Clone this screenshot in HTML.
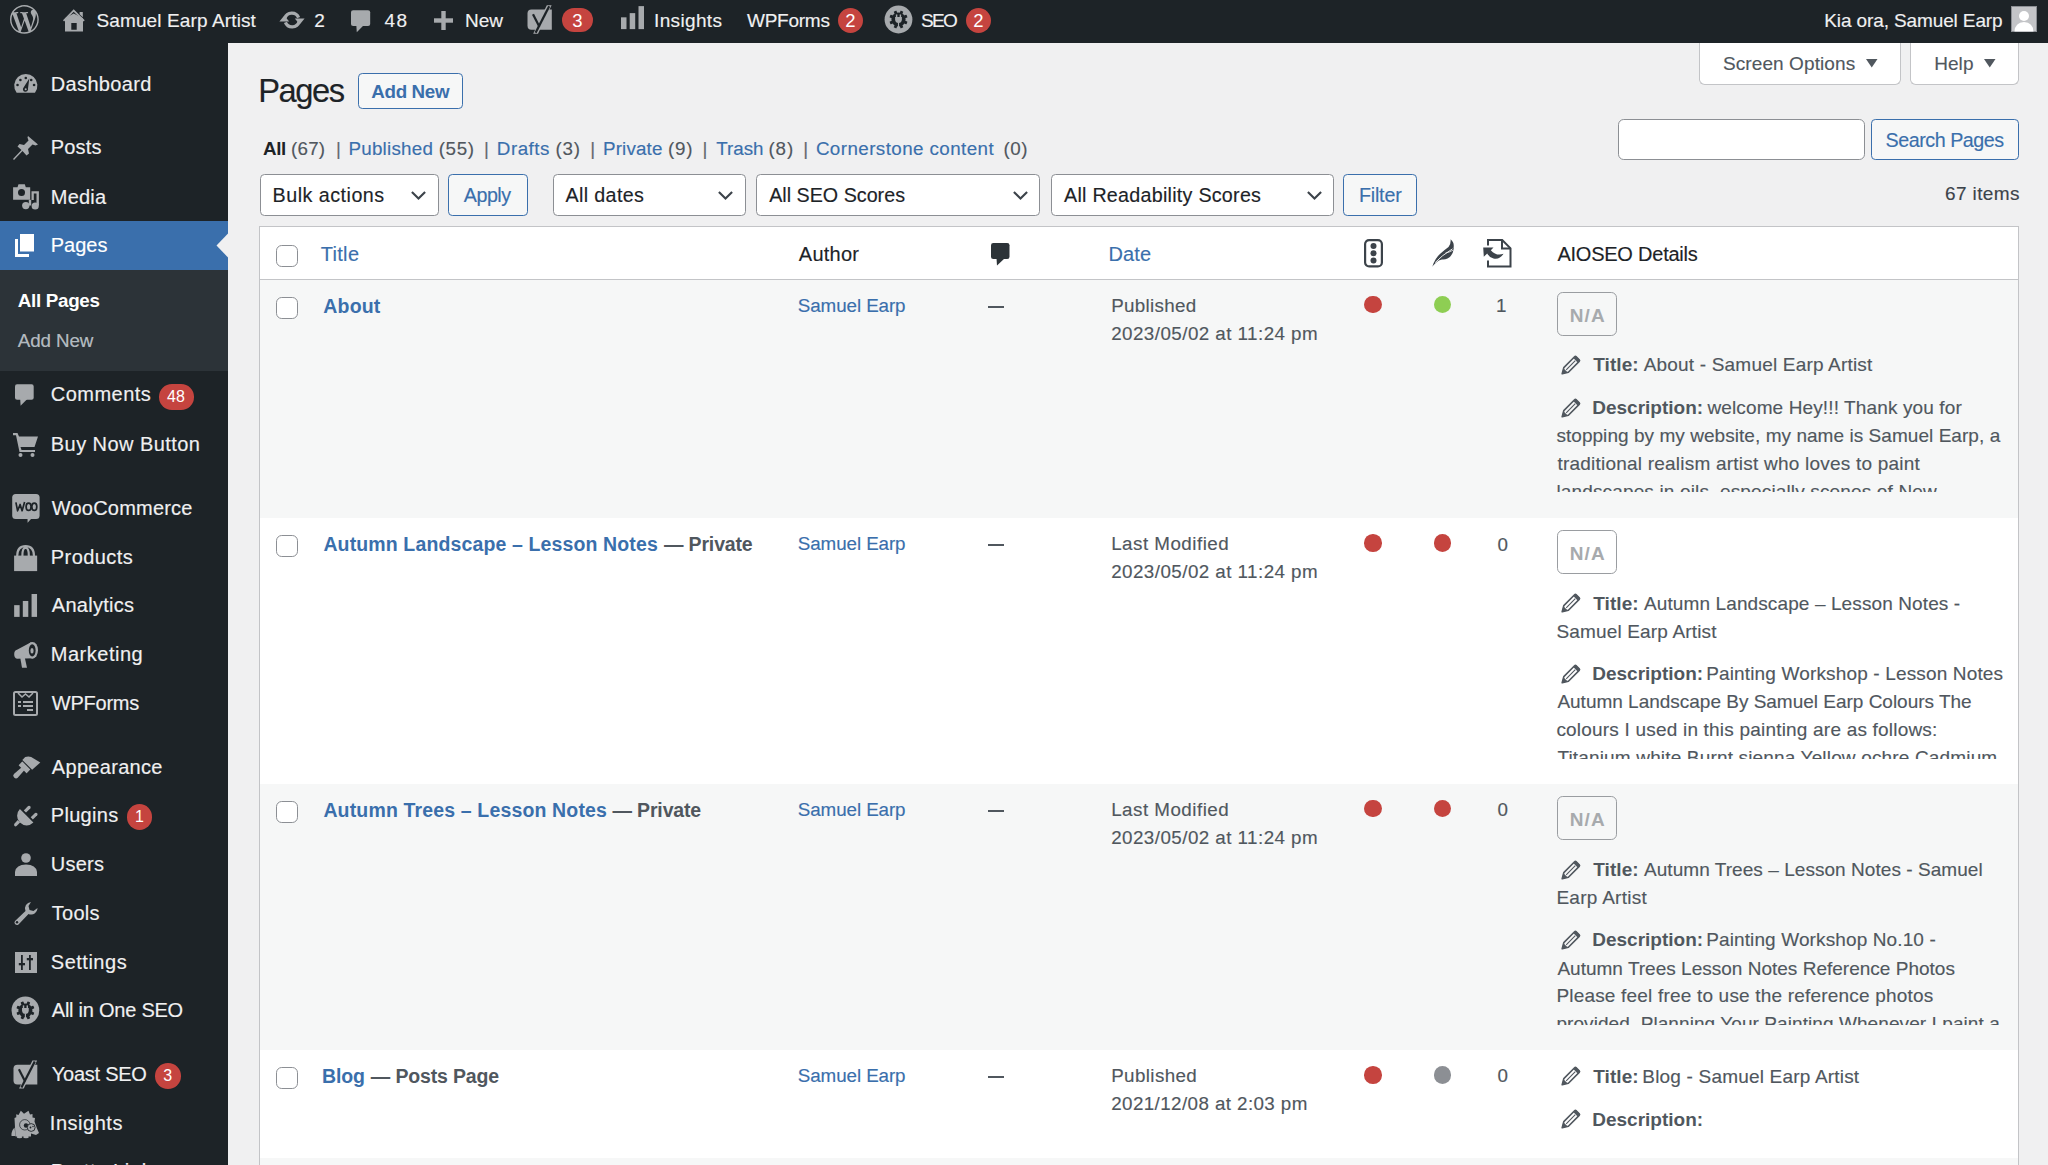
<!DOCTYPE html>
<html><head><meta charset="utf-8"><title>Pages ‹ Samuel Earp Artist — WordPress</title>
<style>
html,body{margin:0;padding:0}
body{width:2048px;height:1165px;overflow:hidden;position:relative;background:#f0f0f1;font-family:"Liberation Sans",sans-serif}
.t{position:absolute;white-space:nowrap;line-height:1}
svg{overflow:visible}
</style></head><body>
<div style='position:absolute;left:0px;top:0px;width:2048px;height:42.5px;background:#1d2327'></div>
<div style='position:absolute;left:0px;top:42.5px;width:227.5px;height:1122.5px;background:#1d2327'></div>
<div style='position:absolute;left:0px;top:220.7px;width:227.5px;height:49.1px;background:#3a6fac'></div>
<div style='position:absolute;left:0px;top:269.8px;width:227.5px;height:101.0px;background:#2c3338'></div>
<svg style='position:absolute;left:215.5px;top:232.5px;width:12.5px;height:25px' viewBox='0 0 12.5 25'><path d='M12.5 0 L0.5 12.5 L12.5 25 Z' fill='#f0f0f1'/></svg>
<div style='position:absolute;left:1699.4px;top:42.5px;width:201.6px;height:42.1px;background:#fff;border:1.4px solid #c3c4c7;border-top:none;border-radius:0 0 5.7px 5.7px;box-sizing:border-box'></div>
<div style='position:absolute;left:1910.4px;top:42.5px;width:108.9px;height:42.1px;background:#fff;border:1.4px solid #c3c4c7;border-top:none;border-radius:0 0 5.7px 5.7px;box-sizing:border-box'></div>
<svg style='position:absolute;left:1866px;top:58.9px;width:11.5px;height:8.5px;' viewBox='0 0 11.5 8.5'><path d='M0 0 L11.5 0 L5.75 8.5 Z' fill='#50575e'/></svg>
<svg style='position:absolute;left:1983.7px;top:58.9px;width:11.5px;height:8.5px;' viewBox='0 0 11.5 8.5'><path d='M0 0 L11.5 0 L5.75 8.5 Z' fill='#50575e'/></svg>
<div style='position:absolute;left:1618.1px;top:118.5px;width:246.6px;height:41.9px;background:#fff;border:1.4px solid #8c8f94;border-radius:5.7px;box-sizing:border-box'></div>
<div style='position:absolute;left:1871px;top:118.5px;width:148.3px;height:41.9px;background:#f6f7f7;border:1.4px solid #3a6fac;border-radius:4.3px;box-sizing:border-box'></div>
<div style='position:absolute;left:358px;top:73.4px;width:105.4px;height:35.2px;background:#f6f7f7;border:1.4px solid #3a6fac;border-radius:4.3px;box-sizing:border-box'></div>
<div style='position:absolute;left:260.3px;top:174px;width:178.45px;height:41.6px;background:#fff;border:1.5px solid #8c8f94;border-radius:4.5px;box-sizing:border-box'></div>
<svg style='position:absolute;left:411.4px;top:191.4px;width:15px;height:9px;' viewBox='0 0 15 9'><path d='M0.9 0.9 L7.5 7.6 L14.1 0.9' fill='none' stroke='#3c434a' stroke-width='2.1'/></svg>
<div style='position:absolute;left:552.5px;top:174px;width:193.0px;height:41.6px;background:#fff;border:1.5px solid #8c8f94;border-radius:4.5px;box-sizing:border-box'></div>
<svg style='position:absolute;left:718.2px;top:191.4px;width:15px;height:9px;' viewBox='0 0 15 9'><path d='M0.9 0.9 L7.5 7.6 L14.1 0.9' fill='none' stroke='#3c434a' stroke-width='2.1'/></svg>
<div style='position:absolute;left:756.4px;top:174px;width:283.4px;height:41.6px;background:#fff;border:1.5px solid #8c8f94;border-radius:4.5px;box-sizing:border-box'></div>
<svg style='position:absolute;left:1013.3px;top:191.4px;width:15px;height:9px;' viewBox='0 0 15 9'><path d='M0.9 0.9 L7.5 7.6 L14.1 0.9' fill='none' stroke='#3c434a' stroke-width='2.1'/></svg>
<div style='position:absolute;left:1050.9px;top:174px;width:283.4px;height:41.6px;background:#fff;border:1.5px solid #8c8f94;border-radius:4.5px;box-sizing:border-box'></div>
<svg style='position:absolute;left:1307px;top:191.4px;width:15px;height:9px;' viewBox='0 0 15 9'><path d='M0.9 0.9 L7.5 7.6 L14.1 0.9' fill='none' stroke='#3c434a' stroke-width='2.1'/></svg>
<div style='position:absolute;left:447.5px;top:174px;width:80.0px;height:41.6px;background:#f6f7f7;border:1.5px solid #3a6fac;border-radius:4.3px;box-sizing:border-box'></div>
<div style='position:absolute;left:1343.3px;top:174px;width:74.1px;height:41.6px;background:#f6f7f7;border:1.5px solid #3a6fac;border-radius:4.3px;box-sizing:border-box'></div>
<div style='position:absolute;left:259.0px;top:226.3px;width:1760.3px;height:943.7px;background:#fff;border:1.3px solid #c3c4c7;box-sizing:border-box'></div>
<div style='position:absolute;left:260.3px;top:278.7px;width:1757.7px;height:1.4px;background:#c3c4c7'></div>
<div style='position:absolute;left:260.3px;top:280.1px;width:1757.7px;height:237.8px;background:#f6f7f7'></div>
<div style='position:absolute;left:260.3px;top:783.7px;width:1757.7px;height:266.3px;background:#f6f7f7'></div>
<div style='position:absolute;left:260.3px;top:1158.1px;width:1757.7px;height:11.9px;background:#f6f7f7'></div>
<div style='position:absolute;left:276.1px;top:244.8px;width:22.4px;height:22.4px;background:#fff;border:1.6px solid #8c8f94;border-radius:5.7px;box-sizing:border-box'></div>
<div style='position:absolute;left:276.1px;top:296.5px;width:22.4px;height:22.4px;background:#fff;border:1.6px solid #8c8f94;border-radius:5.7px;box-sizing:border-box'></div>
<div style='position:absolute;left:988px;top:306px;width:15.5px;height:2px;background:#50575e'></div>
<div style='position:absolute;left:1364.3px;top:295.7px;width:17.5px;height:17.5px;background:#c5443f;border-radius:50%'></div>
<div style='position:absolute;left:1433.7px;top:295.7px;width:17.5px;height:17.5px;background:#8ece53;border-radius:50%'></div>
<div style='position:absolute;left:1557px;top:291.8px;width:60.4px;height:43.9px;border:1.5px solid #9a9da1;border-radius:5.7px;box-sizing:border-box'></div>
<svg style='position:absolute;left:1561.2px;top:355.0px;width:20px;height:20px;' viewBox='0 0 20 20'><path d='M1.2 18.8 L2.8 12.6 L13.6 1.8 Q14.4 1 15.2 1.8 L18.2 4.8 Q19 5.6 18.2 6.4 L7.4 17.2 Z' fill='none' stroke='#50575e' stroke-width='1.6' stroke-linejoin='round'/><path d='M1 19 L2.4 13.2 L6.8 17.6 Z' fill='#50575e'/><path d='M12.3 3.1 L14.4 1.4 Q14.8 1.1 15.2 1.4 L18.6 4.8 Q18.9 5.2 18.6 5.6 L16.9 7.7 Z' fill='#50575e'/><path d='M5.2 14.8 L14.3 5.7' stroke='#50575e' stroke-width='1.1'/></svg>
<svg style='position:absolute;left:1561.2px;top:397.7px;width:20px;height:20px;' viewBox='0 0 20 20'><path d='M1.2 18.8 L2.8 12.6 L13.6 1.8 Q14.4 1 15.2 1.8 L18.2 4.8 Q19 5.6 18.2 6.4 L7.4 17.2 Z' fill='none' stroke='#50575e' stroke-width='1.6' stroke-linejoin='round'/><path d='M1 19 L2.4 13.2 L6.8 17.6 Z' fill='#50575e'/><path d='M12.3 3.1 L14.4 1.4 Q14.8 1.1 15.2 1.4 L18.6 4.8 Q18.9 5.2 18.6 5.6 L16.9 7.7 Z' fill='#50575e'/><path d='M5.2 14.8 L14.3 5.7' stroke='#50575e' stroke-width='1.1'/></svg>
<div style='position:absolute;left:276.1px;top:534.9px;width:22.4px;height:22.4px;background:#fff;border:1.6px solid #8c8f94;border-radius:5.7px;box-sizing:border-box'></div>
<div style='position:absolute;left:988px;top:544px;width:15.5px;height:2px;background:#50575e'></div>
<div style='position:absolute;left:1364.3px;top:534.1px;width:17.5px;height:17.5px;background:#c5443f;border-radius:50%'></div>
<div style='position:absolute;left:1433.7px;top:534.1px;width:17.5px;height:17.5px;background:#c5443f;border-radius:50%'></div>
<div style='position:absolute;left:1557px;top:530.4px;width:60.4px;height:43.8px;border:1.5px solid #9a9da1;border-radius:5.7px;box-sizing:border-box'></div>
<svg style='position:absolute;left:1561.2px;top:593.3px;width:20px;height:20px;' viewBox='0 0 20 20'><path d='M1.2 18.8 L2.8 12.6 L13.6 1.8 Q14.4 1 15.2 1.8 L18.2 4.8 Q19 5.6 18.2 6.4 L7.4 17.2 Z' fill='none' stroke='#50575e' stroke-width='1.6' stroke-linejoin='round'/><path d='M1 19 L2.4 13.2 L6.8 17.6 Z' fill='#50575e'/><path d='M12.3 3.1 L14.4 1.4 Q14.8 1.1 15.2 1.4 L18.6 4.8 Q18.9 5.2 18.6 5.6 L16.9 7.7 Z' fill='#50575e'/><path d='M5.2 14.8 L14.3 5.7' stroke='#50575e' stroke-width='1.1'/></svg>
<svg style='position:absolute;left:1561.2px;top:663.8px;width:20px;height:20px;' viewBox='0 0 20 20'><path d='M1.2 18.8 L2.8 12.6 L13.6 1.8 Q14.4 1 15.2 1.8 L18.2 4.8 Q19 5.6 18.2 6.4 L7.4 17.2 Z' fill='none' stroke='#50575e' stroke-width='1.6' stroke-linejoin='round'/><path d='M1 19 L2.4 13.2 L6.8 17.6 Z' fill='#50575e'/><path d='M12.3 3.1 L14.4 1.4 Q14.8 1.1 15.2 1.4 L18.6 4.8 Q18.9 5.2 18.6 5.6 L16.9 7.7 Z' fill='#50575e'/><path d='M5.2 14.8 L14.3 5.7' stroke='#50575e' stroke-width='1.1'/></svg>
<div style='position:absolute;left:276.1px;top:800.7px;width:22.4px;height:22.4px;background:#fff;border:1.6px solid #8c8f94;border-radius:5.7px;box-sizing:border-box'></div>
<div style='position:absolute;left:988px;top:810px;width:15.5px;height:2px;background:#50575e'></div>
<div style='position:absolute;left:1364.3px;top:799.9px;width:17.5px;height:17.5px;background:#c5443f;border-radius:50%'></div>
<div style='position:absolute;left:1433.7px;top:799.9px;width:17.5px;height:17.5px;background:#c5443f;border-radius:50%'></div>
<div style='position:absolute;left:1557px;top:796.1px;width:60.4px;height:44.2px;border:1.5px solid #9a9da1;border-radius:5.7px;box-sizing:border-box'></div>
<svg style='position:absolute;left:1561.2px;top:859.5px;width:20px;height:20px;' viewBox='0 0 20 20'><path d='M1.2 18.8 L2.8 12.6 L13.6 1.8 Q14.4 1 15.2 1.8 L18.2 4.8 Q19 5.6 18.2 6.4 L7.4 17.2 Z' fill='none' stroke='#50575e' stroke-width='1.6' stroke-linejoin='round'/><path d='M1 19 L2.4 13.2 L6.8 17.6 Z' fill='#50575e'/><path d='M12.3 3.1 L14.4 1.4 Q14.8 1.1 15.2 1.4 L18.6 4.8 Q18.9 5.2 18.6 5.6 L16.9 7.7 Z' fill='#50575e'/><path d='M5.2 14.8 L14.3 5.7' stroke='#50575e' stroke-width='1.1'/></svg>
<svg style='position:absolute;left:1561.2px;top:929.7px;width:20px;height:20px;' viewBox='0 0 20 20'><path d='M1.2 18.8 L2.8 12.6 L13.6 1.8 Q14.4 1 15.2 1.8 L18.2 4.8 Q19 5.6 18.2 6.4 L7.4 17.2 Z' fill='none' stroke='#50575e' stroke-width='1.6' stroke-linejoin='round'/><path d='M1 19 L2.4 13.2 L6.8 17.6 Z' fill='#50575e'/><path d='M12.3 3.1 L14.4 1.4 Q14.8 1.1 15.2 1.4 L18.6 4.8 Q18.9 5.2 18.6 5.6 L16.9 7.7 Z' fill='#50575e'/><path d='M5.2 14.8 L14.3 5.7' stroke='#50575e' stroke-width='1.1'/></svg>
<div style='position:absolute;left:276.1px;top:1067px;width:22.4px;height:22.4px;background:#fff;border:1.6px solid #8c8f94;border-radius:5.7px;box-sizing:border-box'></div>
<div style='position:absolute;left:988px;top:1076px;width:15.5px;height:2px;background:#50575e'></div>
<div style='position:absolute;left:1364.3px;top:1066.2px;width:17.5px;height:17.5px;background:#c5443f;border-radius:50%'></div>
<div style='position:absolute;left:1433.7px;top:1066.2px;width:17.5px;height:17.5px;background:#8c8f94;border-radius:50%'></div>
<svg style='position:absolute;left:1561.2px;top:1066px;width:20px;height:20px;' viewBox='0 0 20 20'><path d='M1.2 18.8 L2.8 12.6 L13.6 1.8 Q14.4 1 15.2 1.8 L18.2 4.8 Q19 5.6 18.2 6.4 L7.4 17.2 Z' fill='none' stroke='#50575e' stroke-width='1.6' stroke-linejoin='round'/><path d='M1 19 L2.4 13.2 L6.8 17.6 Z' fill='#50575e'/><path d='M12.3 3.1 L14.4 1.4 Q14.8 1.1 15.2 1.4 L18.6 4.8 Q18.9 5.2 18.6 5.6 L16.9 7.7 Z' fill='#50575e'/><path d='M5.2 14.8 L14.3 5.7' stroke='#50575e' stroke-width='1.1'/></svg>
<svg style='position:absolute;left:1561.2px;top:1108.9px;width:20px;height:20px;' viewBox='0 0 20 20'><path d='M1.2 18.8 L2.8 12.6 L13.6 1.8 Q14.4 1 15.2 1.8 L18.2 4.8 Q19 5.6 18.2 6.4 L7.4 17.2 Z' fill='none' stroke='#50575e' stroke-width='1.6' stroke-linejoin='round'/><path d='M1 19 L2.4 13.2 L6.8 17.6 Z' fill='#50575e'/><path d='M12.3 3.1 L14.4 1.4 Q14.8 1.1 15.2 1.4 L18.6 4.8 Q18.9 5.2 18.6 5.6 L16.9 7.7 Z' fill='#50575e'/><path d='M5.2 14.8 L14.3 5.7' stroke='#50575e' stroke-width='1.1'/></svg>
<svg style='position:absolute;left:990.7px;top:243.2px;width:18.5px;height:22.5px;' viewBox='0 0 18.5 22.5'><rect x='0' y='0' width='18.5' height='16' rx='2.3' fill='#2c3338'/><path d='M5.5 15 L14 15 L6 22.5 Z' fill='#2c3338'/></svg>
<svg style='position:absolute;left:1364.3px;top:239px;width:19px;height:28.5px;' viewBox='0 0 19 28.5'><rect x='1.1' y='1.1' width='16.8' height='26.3' rx='4' fill='none' stroke='#3c434a' stroke-width='2.2'/><circle cx='9.5' cy='7' r='3' fill='#3c434a'/><circle cx='9.5' cy='14.2' r='3' fill='#3c434a'/><circle cx='9.5' cy='21.5' r='3' fill='#3c434a'/></svg>
<svg style='position:absolute;left:1432px;top:239.2px;width:22px;height:28px;' viewBox='0 0 22 28'><path d='M0.3 27.8 Q3 19 8.5 14.5 Q13 10.5 16.5 8 Q19 5.5 18.6 0.3 Q22.5 3.5 21.6 8.5 Q21.8 9.5 21.5 11 Q20.5 17 15.5 19.5 Q13 20.8 10 20.5 Q6.5 21 4.2 23.5 Q2 25.5 0.3 27.8 Z' fill='#3c434a'/><path d='M3.2 23.6 Q9 17 20.5 9.8' fill='none' stroke='#fff' stroke-width='0.9'/><path d='M13.5 14 Q17 13.5 21.5 11' fill='none' stroke='#fff' stroke-width='0.7'/></svg>
<svg style='position:absolute;left:1482.7px;top:239px;width:29px;height:28.5px;' viewBox='0 0 29 28.5'><path d='M5 6.5 L5 1 L19.2 1 L27.5 9.3 L27.5 27.5 L5 27.5 L5 21.5' fill='none' stroke='#3c434a' stroke-width='2'/><path d='M19 1 L19 9.5 L27.5 9.5' fill='none' stroke='#3c434a' stroke-width='2'/><path d='M0.2 8.5 L10.5 8.6 L7.8 11.2 Q13.5 17.5 20.5 14.8 Q16.5 21 10.5 19.5 Q6 18.2 4.2 14.5 L0.8 17.8 Z' fill='#3c434a'/></svg>
<svg style='position:absolute;left:9.8px;top:5.4px;width:28.8px;height:28.8px;' viewBox='0 0 24 24'><path fill='#a7aaad' d='M21.469 6.825c.84 1.537 1.318 3.3 1.318 5.175 0 3.979-2.156 7.456-5.363 9.325l3.295-9.527c.615-1.54.82-2.771.82-3.864 0-.405-.026-.78-.07-1.11m-7.981.105c.647-.03 1.232-.105 1.232-.105.582-.075.514-.93-.067-.899 0 0-1.755.135-2.88.135-1.064 0-2.85-.15-2.85-.15-.585-.03-.661.855-.075.885 0 0 .54.061 1.125.09l1.68 4.605-2.37 7.08L5.354 6.9c.649-.03 1.234-.1 1.234-.1.585-.075.516-.93-.065-.896 0 0-1.746.138-2.874.138-.2 0-.438-.008-.69-.015C4.911 3.15 8.235 1.215 12 1.215c2.809 0 5.365 1.072 7.286 2.833-.046-.003-.091-.009-.141-.009-1.06 0-1.812.923-1.812 1.914 0 .89.513 1.643 1.06 2.531.411.72.89 1.643.89 2.977 0 .915-.354 1.994-.821 3.479l-1.075 3.585-3.9-11.61.001.014zM12 22.784c-1.059 0-2.081-.153-3.048-.437l3.237-9.406 3.315 9.087c.024.053.05.101.078.149-1.12.393-2.325.609-3.582.609M1.211 12c0-1.564.336-3.05.935-4.39L7.29 21.709C3.694 19.96 1.212 16.271 1.211 12M12 0C5.385 0 0 5.385 0 12s5.385 12 12 12 12-5.385 12-12S18.615 0 12 0'/></svg>
<svg style='position:absolute;left:63px;top:9px;width:22px;height:23px;' viewBox='0 0 22 23'><path d='M0.00 11.30 L10.70 0.30 L21.70 11.30 L20.60 12.50 L10.70 2.80 L1.10 12.50 Z' fill='#a7aaad'/><path d='M16.60 3.00 L19.80 3.00 L19.80 8.20 L16.60 5.20 Z' fill='#a7aaad'/><path d='M2.00 9.30 L10.70 4.50 L20.00 9.30 L20.00 22.50 L2.00 22.50 Z M8.30 14.00 L8.30 20.80 L13.70 20.80 L13.70 14.00 Z' fill='#a7aaad' fill-rule='evenodd'/></svg>
<svg style='position:absolute;left:279px;top:10px;width:26px;height:20px;' viewBox='0 0 26 20'><path d='M5.9 8.2 A7.3 7.3 0 0 1 19.6 7.6' fill='none' stroke='#a7aaad' stroke-width='3.3'/><path d='M15.8 8.6 L25.6 8.6 L20.7 14.6 Z' fill='#a7aaad'/><path d='M20.1 11.8 A7.3 7.3 0 0 1 6.4 12.4' fill='none' stroke='#a7aaad' stroke-width='3.3'/><path d='M0.4 11.4 L10.2 11.4 L5.3 5.4 Z' fill='#a7aaad'/></svg>
<svg style='position:absolute;left:351px;top:9.8px;width:19.2px;height:22.4px;' viewBox='0 0 20 23'><rect x='0' y='0' width='20' height='16.5' rx='2.2' fill='#a7aaad'/><path d='M5.5 15 L14 15 L6 23 Z' fill='#a7aaad'/></svg>
<svg style='position:absolute;left:434px;top:11.2px;width:19px;height:19px;' viewBox='0 0 19 19'><rect x='7.3' y='0' width='4.4' height='19' fill='#a7aaad'/><rect x='0' y='7.3' width='19' height='4.4' fill='#a7aaad'/></svg>
<svg style='position:absolute;left:527px;top:5px;width:25px;height:29px;' viewBox='0 0 25 29'><path d='M4.5 4.6 L24.8 4.6 L24.8 24.7 L4.5 24.7 Q0.5 24.7 0.5 20.7 L0.5 8.6 Q0.5 4.6 4.5 4.6 Z' fill='#a7aaad'/><path d='M19.8 0.3 L24.6 0.3 L11 28.8 L6.2 28.8 Z' fill='#a7aaad'/><path d='M22.2 1.3 L8.6 27.8' stroke='#1d2327' stroke-width='2.3' fill='none'/><path d='M6 9.2 L12.4 21.8' stroke='#1d2327' stroke-width='2.2' fill='none'/></svg>
<div style='position:absolute;left:562.2px;top:7.9px;width:30.5px;height:24px;border-radius:12.0px;background:#c5443f;color:#fff;font-size:18.5px;line-height:25.5px;text-align:center;font-family:"Liberation Sans",sans-serif'>3</div>
<svg style='position:absolute;left:620.75px;top:5.5px;width:23px;height:23.25px;' viewBox='0 0 23 23'><rect x='0' y='11.2' width='5.5' height='11.8' fill='#a7aaad'/><rect x='8.7' y='7' width='5.5' height='16' fill='#a7aaad'/><rect x='17.5' y='0' width='5.5' height='23' fill='#a7aaad'/></svg>
<div style='position:absolute;left:837.75px;top:7.5px;width:25.5px;height:25px;border-radius:12.5px;background:#c5443f;color:#fff;font-size:18.5px;line-height:26.5px;text-align:center;font-family:"Liberation Sans",sans-serif'>2</div>
<svg style='position:absolute;left:883.9px;top:5.0px;width:29px;height:29px;' viewBox='0 0 30 30'><circle cx='15' cy='15' r='14.4' fill='#a7aaad'/><circle cx='15' cy='15' r='7.3' fill='#1d2327'/><rect x='20.52' y='10.19' width='3' height='3.8' rx='0.5' transform='rotate(67.5 22.02 12.09)' fill='#1d2327'/><rect x='16.41' y='6.08' width='3' height='3.8' rx='0.5' transform='rotate(22.5 17.91 7.98)' fill='#1d2327'/><rect x='10.59' y='6.08' width='3' height='3.8' rx='0.5' transform='rotate(-22.5 12.09 7.98)' fill='#1d2327'/><rect x='6.48' y='10.19' width='3' height='3.8' rx='0.5' transform='rotate(-67.5 7.98 12.09)' fill='#1d2327'/><rect x='6.48' y='16.01' width='3' height='3.8' rx='0.5' transform='rotate(-112.5 7.98 17.91)' fill='#1d2327'/><rect x='10.59' y='20.12' width='3' height='3.8' rx='0.5' transform='rotate(-157.5 12.09 22.02)' fill='#1d2327'/><rect x='16.41' y='20.12' width='3' height='3.8' rx='0.5' transform='rotate(-202.5 17.91 22.02)' fill='#1d2327'/><rect x='20.52' y='16.01' width='3' height='3.8' rx='0.5' transform='rotate(-247.5 22.02 17.91)' fill='#1d2327'/><rect x='12.3' y='9.8' width='1.5' height='3' fill='#a7aaad'/><rect x='16.2' y='9.8' width='1.5' height='3' fill='#a7aaad'/><path d='M11.5 12.4 L18.5 12.4 L18.5 14.8 Q18.5 18.6 15 18.6 Q11.5 18.6 11.5 14.8 Z' fill='#a7aaad'/><rect x='14.4' y='18' width='1.2' height='7' fill='#a7aaad'/></svg>
<div style='position:absolute;left:965.75px;top:7.5px;width:25.5px;height:25px;border-radius:12.5px;background:#c5443f;color:#fff;font-size:18.5px;line-height:26.5px;text-align:center;font-family:"Liberation Sans",sans-serif'>2</div>
<svg style='position:absolute;left:2011px;top:5.8px;width:26px;height:26px;' viewBox='0 0 26 26'><rect x='0.5' y='0.5' width='25' height='25' fill='#c3c4c7' stroke='#8c8f94' stroke-width='1'/><circle cx='13' cy='10' r='5' fill='#fff'/><path d='M3.5 25.5 Q4 16.5 13 16 Q22 16.5 22.5 25.5 Z' fill='#fff'/></svg>
<svg style='position:absolute;left:13.8px;top:73.7px;width:24px;height:20px;' viewBox='0 0 24 20'><path d='M2.63 18.7 A11.6 11.6 0 1 1 20.97 18.7 Z' fill='#a7aaad'/><circle cx='3.53' cy='10.94' r='1.3' fill='#1d2327'/><circle cx='6.40' cy='5.97' r='1.3' fill='#1d2327'/><circle cx='11.80' cy='4.00' r='1.3' fill='#1d2327'/><circle cx='17.20' cy='5.97' r='1.3' fill='#1d2327'/><circle cx='20.07' cy='10.94' r='1.3' fill='#1d2327'/><path d='M15.3 4.6 L14 14.5 A2.6 2.6 0 1 1 9.6 13.4 Z' fill='#1d2327'/><circle cx='11.7' cy='15.2' r='1.0' fill='#a7aaad'/></svg>
<svg style='position:absolute;left:12.8px;top:135.9px;width:25px;height:24px;' viewBox='0 0 25 24'><path d='M15 0 L25 8.5 L22.5 9.5 L19.5 8.5 L15 13 L16 17.5 L13.5 19.5 L9.5 15 L1 24 L0 23 L8.5 14 L4.5 10.5 L6.5 8 L11 9 L15.5 4.5 L14.5 1.5 Z' fill='#a7aaad'/></svg>
<svg style='position:absolute;left:12.8px;top:184.2px;width:27px;height:27px;' viewBox='0 0 27 27'><path d='M0.10 3.20 L4.50 3.20 L5.50 0.20 L11.80 0.20 L12.80 3.20 L17.20 3.20 L17.20 15.80 L0.10 15.80 Z' fill='#a7aaad'/><circle cx='8.50' cy='8.60' r='3.5' fill='#1d2327'/><path d='M18.50 7.30 L25.90 7.30 L25.90 21.50 L23.50 21.50 L23.50 9.60 L20.80 9.60 L20.80 16.00 L18.50 16.00 Z' fill='#a7aaad'/><circle cx='22.20' cy='22.00' r='3.6' fill='#a7aaad'/><path d='M15.80 15.80 L18.20 15.80 L18.20 21.50 L15.80 21.50 Z' fill='#a7aaad'/><circle cx='12.80' cy='21.60' r='3.7' fill='#a7aaad'/></svg>
<svg style='position:absolute;left:15.2px;top:234px;width:19px;height:23px;' viewBox='0 0 19 23'><rect x='5' y='0' width='14' height='17.5' fill='#fff'/><path d='M0 5 L3 5 L3 20 L14 20 L14 23 L0 23 Z' fill='#fff'/></svg>
<svg style='position:absolute;left:15.4px;top:384px;width:18.7px;height:22.2px;' viewBox='0 0 20 23'><rect x='0' y='0' width='20' height='16.5' rx='2.2' fill='#a7aaad'/><path d='M5.5 15 L14 15 L6 23 Z' fill='#a7aaad'/></svg>
<div style='position:absolute;left:158.5px;top:384.1px;width:35px;height:25.7px;border-radius:12.85px;background:#c5443f;color:#fff;font-size:16px;line-height:26.2px;text-align:center;font-family:"Liberation Sans",sans-serif'>48</div>
<svg style='position:absolute;left:12.8px;top:432.8px;width:25px;height:24px;' viewBox='0 0 25 24'><path d='M0 0 L4.5 0 L6 3.5 L25 3.5 L21.5 14 L7.5 14 L8.5 17 L22 17 L22 19 L6.5 19 L3 2.2 L0 2.2 Z' fill='#a7aaad'/><circle cx='7.5' cy='22' r='2' fill='#a7aaad'/><circle cx='19.5' cy='22' r='2' fill='#a7aaad'/></svg>
<svg style='position:absolute;left:11.8px;top:494px;width:28px;height:29px;' viewBox='0 0 28 29'><rect x='0.2' y='0' width='27.4' height='25.1' rx='3.5' fill='#a7aaad'/><path d='M15.5 24.5 L15.6 28.7 L19.5 24.5 Z' fill='#a7aaad'/><path d='M3.9 8.3 L5.6 16.8 L8.1 10.5 L10.1 16.8 L12.6 8.0' fill='none' stroke='#1d2327' stroke-width='1.7' stroke-linejoin='round'/><ellipse cx='16.6' cy='12.8' rx='2.5' ry='3.6' fill='none' stroke='#1d2327' stroke-width='1.7'/><ellipse cx='22.3' cy='12.8' rx='2.5' ry='3.6' fill='none' stroke='#1d2327' stroke-width='1.7'/></svg>
<svg style='position:absolute;left:13.9px;top:544.8px;width:24px;height:27px;' viewBox='0 0 24 27'><rect x='0.10' y='10.60' width='23.05' height='15.5' fill='#a7aaad'/><path d='M3.2 11 Q3.2 1.1 11.6 1.1 Q20 1.1 20 11' fill='none' stroke='#a7aaad' stroke-width='2.2'/><path d='M8.4 11 Q8.2 3 11.6 2.6 Q15 3 14.8 11' fill='none' stroke='#a7aaad' stroke-width='2.2'/></svg>
<svg style='position:absolute;left:13.9px;top:594.4px;width:23.2px;height:22.9px;' viewBox='0 0 23 23'><rect x='0' y='11.2' width='5.5' height='11.8' fill='#a7aaad'/><rect x='8.7' y='7' width='5.5' height='16' fill='#a7aaad'/><rect x='17.5' y='0' width='5.5' height='23' fill='#a7aaad'/></svg>
<svg style='position:absolute;left:13px;top:641.4px;width:27px;height:28px;' viewBox='0 0 27 28'><path d='M4.00 8.70 L18.50 1.10 L20.50 17.30 L4.00 17.70 Q1.20 17.00 1.20 13.20 Q1.20 9.30 4.00 8.70 Z' fill='#a7aaad'/><ellipse cx='19.40' cy='9.30' rx='5.6' ry='8.4' fill='#a7aaad'/><ellipse cx='19.20' cy='9.40' rx='3.4' ry='6.1' fill='#1d2327'/><ellipse cx='19.00' cy='9.80' rx='1.6' ry='2.7' fill='#a7aaad'/><path d='M7.30 17.00 L11.80 16.80 L14.00 26.70 L9.00 26.70 Z' fill='#a7aaad'/></svg>
<svg style='position:absolute;left:13px;top:691px;width:25px;height:25px;' viewBox='0 0 25 25'><rect x='1' y='1' width='23' height='23' rx='1.5' fill='none' stroke='#a7aaad' stroke-width='2'/><path d='M5 2 L9 6 L12.5 3 L16 6 L20 2' fill='none' stroke='#a7aaad' stroke-width='1.6'/><rect x='5' y='10' width='3' height='2' fill='#a7aaad'/><rect x='10' y='10' width='10' height='2' fill='#a7aaad'/><rect x='5' y='14' width='3' height='2' fill='#a7aaad'/><rect x='10' y='14' width='10' height='2' fill='#a7aaad'/><rect x='14' y='18' width='6' height='2' fill='#a7aaad'/></svg>
<svg style='position:absolute;left:12.8px;top:755.7px;width:28px;height:23px;' viewBox='0 0 28 23'><g transform='translate(1.00 21.70) rotate(-45)'><path d='M0.2 0 Q0.2 -2.7 2.6 -2.7 L12.5 -2.0 L12.5 2.0 L2.6 2.7 Q0.2 2.7 0.2 0 Z' fill='#a7aaad'/><rect x='12' y='-5.6' width='5.4' height='11.4' rx='0.5' fill='#a7aaad'/><path d='M18.4 -6.6 L22.5 -6.6 Q25.5 -5.5 26.8 -2.5 L29.3 7.9 L18.4 7.3 Z' fill='#a7aaad'/></g></svg>
<svg style='position:absolute;left:14.2px;top:805px;width:24px;height:23px;' viewBox='0 0 24 23'><path d='M5.90 4.10 L19.40 17.60 A9.5 9.5 0 0 1 5.90 4.10 Z' fill='#a7aaad'/><path d='M3.80 15.10 L6.10 17.40 L2.80 20.80 Q1.50 21.90 0.50 20.90 Q-0.50 19.80 0.60 18.50 Z' fill='#a7aaad'/><path d='M9.80 5.40 L14.10 1.10 Q15.30 0.30 16.30 1.30 Q17.10 2.30 16.30 3.40 L12.00 7.60 Z' fill='#a7aaad'/><path d='M16.70 12.30 L21.00 8.00 Q22.20 7.20 23.20 8.20 Q24.00 9.20 23.20 10.30 L18.90 14.50 Z' fill='#a7aaad'/></svg>
<div style='position:absolute;left:126.7px;top:804px;width:25.5px;height:26px;border-radius:13.0px;background:#c5443f;color:#fff;font-size:16px;line-height:26.5px;text-align:center;font-family:"Liberation Sans",sans-serif'>1</div>
<svg style='position:absolute;left:14.8px;top:853.4px;width:22px;height:23px;' viewBox='0 0 22 23'><circle cx='11' cy='5' r='4.8' fill='#a7aaad'/><path d='M0 23 L0 19 Q1 11.5 11 11.5 Q21 11.5 22 19 L22 23 Z' fill='#a7aaad'/></svg>
<svg style='position:absolute;left:13.8px;top:901.7px;width:24px;height:23px;' viewBox='0 0 24 23'><path d='M17 0 A6.5 6.5 0 0 0 11.5 9 L1 19 A2.5 2.5 0 0 0 4.5 22.5 L14.5 12 A6.5 6.5 0 0 0 23.5 6 L19.5 9 L15.5 8 L14.5 4 Z' fill='#a7aaad'/><circle cx='3' cy='20.3' r='1.2' fill='#1d2327'/></svg>
<svg style='position:absolute;left:15.4px;top:951.8px;width:22px;height:21px;' viewBox='0 0 22 21'><rect x='0' y='0' width='22' height='21' fill='#a7aaad'/><g fill='#1d2327'><rect x='6' y='3' width='1.8' height='15'/><rect x='14' y='3' width='1.8' height='15'/><rect x='3.8' y='11' width='6.2' height='2.3'/><rect x='11.8' y='6' width='6.2' height='2.3'/></g></svg>
<svg style='position:absolute;left:10.9px;top:996.2px;width:28.8px;height:28.8px;' viewBox='0 0 30 30'><circle cx='15' cy='15' r='14.4' fill='#a7aaad'/><circle cx='15' cy='15' r='7.3' fill='#1d2327'/><rect x='20.52' y='10.19' width='3' height='3.8' rx='0.5' transform='rotate(67.5 22.02 12.09)' fill='#1d2327'/><rect x='16.41' y='6.08' width='3' height='3.8' rx='0.5' transform='rotate(22.5 17.91 7.98)' fill='#1d2327'/><rect x='10.59' y='6.08' width='3' height='3.8' rx='0.5' transform='rotate(-22.5 12.09 7.98)' fill='#1d2327'/><rect x='6.48' y='10.19' width='3' height='3.8' rx='0.5' transform='rotate(-67.5 7.98 12.09)' fill='#1d2327'/><rect x='6.48' y='16.01' width='3' height='3.8' rx='0.5' transform='rotate(-112.5 7.98 17.91)' fill='#1d2327'/><rect x='10.59' y='20.12' width='3' height='3.8' rx='0.5' transform='rotate(-157.5 12.09 22.02)' fill='#1d2327'/><rect x='16.41' y='20.12' width='3' height='3.8' rx='0.5' transform='rotate(-202.5 17.91 22.02)' fill='#1d2327'/><rect x='20.52' y='16.01' width='3' height='3.8' rx='0.5' transform='rotate(-247.5 22.02 17.91)' fill='#1d2327'/><rect x='12.3' y='9.8' width='1.5' height='3' fill='#a7aaad'/><rect x='16.2' y='9.8' width='1.5' height='3' fill='#a7aaad'/><path d='M11.5 12.4 L18.5 12.4 L18.5 14.8 Q18.5 18.6 15 18.6 Q11.5 18.6 11.5 14.8 Z' fill='#a7aaad'/><rect x='14.4' y='18' width='1.2' height='7' fill='#a7aaad'/></svg>
<svg style='position:absolute;left:13.4px;top:1059.8px;width:24.5px;height:28.8px;' viewBox='0 0 25 29'><path d='M4.5 4.6 L24.8 4.6 L24.8 24.7 L4.5 24.7 Q0.5 24.7 0.5 20.7 L0.5 8.6 Q0.5 4.6 4.5 4.6 Z' fill='#a7aaad'/><path d='M19.8 0.3 L24.6 0.3 L11 28.8 L6.2 28.8 Z' fill='#a7aaad'/><path d='M22.2 1.3 L8.6 27.8' stroke='#1d2327' stroke-width='2.3' fill='none'/><path d='M6 9.2 L12.4 21.8' stroke='#1d2327' stroke-width='2.2' fill='none'/></svg>
<div style='position:absolute;left:155px;top:1063.3px;width:25.6px;height:25.7px;border-radius:12.85px;background:#c5443f;color:#fff;font-size:16px;line-height:26.2px;text-align:center;font-family:"Liberation Sans",sans-serif'>3</div>
<svg style='position:absolute;left:11px;top:1109.7px;width:29px;height:29px;' viewBox='0 0 29 29'><path d='M4.50 26.50 L4.00 17.50 L3.50 8.00 L5.30 7.30 L5.20 4.30 L7.50 5.00 L9.80 0.70 L13.00 3.70 L17.50 0.80 L19.00 4.50 L21.50 4.00 L21.50 7.50 L24.00 8.00 L23.50 11.50 L26.00 18.50 L28.00 23.00 L25.00 25.00 L20.00 23.50 L20.00 26.50 Z' fill='#a7aaad'/><path d='M3.50 17.50 L4.50 26.00 L0.50 26.00 Q0.00 21.50 3.50 17.50 Z' fill='#a7aaad'/><ellipse cx='8.50' cy='27.00' rx='2.8' ry='1.2' fill='#a7aaad'/><ellipse cx='15.00' cy='27.00' rx='2.8' ry='1.2' fill='#a7aaad'/><circle cx='13.80' cy='14.80' r='5.2' fill='none' stroke='#1d2327' stroke-width='0.9' opacity='.8'/><circle cx='15.00' cy='15.50' r='2.2' fill='#1d2327'/><circle cx='20.20' cy='17.50' r='3.9' fill='#a7aaad' stroke='#1d2327' stroke-width='0.9'/><circle cx='19.50' cy='17.50' r='0.9' fill='#1d2327'/><circle cx='22.00' cy='16.50' r='0.7' fill='#1d2327'/></svg>
<div class='t' style='left:96.5px;top:11px;font-size:19.0px;color:#f0f0f1;-webkit-text-stroke:0.15px;letter-spacing:0.12px'>Samuel Earp Artist</div>
<div class='t' style='left:314.3px;top:11px;font-size:19.0px;color:#f0f0f1;-webkit-text-stroke:0.15px'>2</div>
<div class='t' style='left:384.5px;top:11px;font-size:19.0px;color:#f0f0f1;-webkit-text-stroke:0.15px;letter-spacing:1.4px'>48</div>
<div class='t' style='left:465px;top:11px;font-size:19.0px;color:#f0f0f1;-webkit-text-stroke:0.15px'>New</div>
<div class='t' style='left:654px;top:11px;font-size:19.0px;color:#f0f0f1;-webkit-text-stroke:0.15px;letter-spacing:0.36px'>Insights</div>
<div class='t' style='left:747px;top:11px;font-size:19.0px;color:#f0f0f1;-webkit-text-stroke:0.15px;letter-spacing:-0.25px'>WPForms</div>
<div class='t' style='left:921px;top:11px;font-size:19.0px;color:#f0f0f1;-webkit-text-stroke:0.15px;letter-spacing:-1.62px'>SEO</div>
<div class='t' style='left:1824.3px;top:11px;font-size:19.0px;color:#f0f0f1;-webkit-text-stroke:0.15px;letter-spacing:-0.12px'>Kia ora, Samuel Earp</div>
<div class='t' style='left:50.8px;top:74px;font-size:20.0px;color:#f0f0f1;-webkit-text-stroke:0.15px;letter-spacing:0.34px'>Dashboard</div>
<div class='t' style='left:50.8px;top:137px;font-size:20.0px;color:#f0f0f1;-webkit-text-stroke:0.15px;letter-spacing:0.15px'>Posts</div>
<div class='t' style='left:50.8px;top:187px;font-size:20.0px;color:#f0f0f1;-webkit-text-stroke:0.15px;letter-spacing:0.22px'>Media</div>
<div class='t' style='left:50.8px;top:235px;font-size:20.0px;color:#ffffff;-webkit-text-stroke:0.15px;letter-spacing:-0.03px'>Pages</div>
<div class='t' style='left:50.8px;top:384px;font-size:20.0px;color:#f0f0f1;-webkit-text-stroke:0.15px;letter-spacing:0.47px'>Comments</div>
<div class='t' style='left:50.8px;top:434px;font-size:20.0px;color:#f0f0f1;-webkit-text-stroke:0.15px;letter-spacing:0.44px'>Buy Now Button</div>
<div class='t' style='left:51.8px;top:498px;font-size:20.0px;color:#f0f0f1;-webkit-text-stroke:0.15px;letter-spacing:0.21px'>WooCommerce</div>
<div class='t' style='left:50.8px;top:547px;font-size:20.0px;color:#f0f0f1;-webkit-text-stroke:0.15px;letter-spacing:0.44px'>Products</div>
<div class='t' style='left:51.8px;top:595px;font-size:20.0px;color:#f0f0f1;-webkit-text-stroke:0.15px;letter-spacing:0.28px'>Analytics</div>
<div class='t' style='left:50.8px;top:644px;font-size:20.0px;color:#f0f0f1;-webkit-text-stroke:0.15px;letter-spacing:0.51px'>Marketing</div>
<div class='t' style='left:51.8px;top:693px;font-size:20.0px;color:#f0f0f1;-webkit-text-stroke:0.15px;letter-spacing:-0.23px'>WPForms</div>
<div class='t' style='left:51.8px;top:757px;font-size:20.0px;color:#f0f0f1;-webkit-text-stroke:0.15px;letter-spacing:0.31px'>Appearance</div>
<div class='t' style='left:50.8px;top:805px;font-size:20.0px;color:#f0f0f1;-webkit-text-stroke:0.15px;letter-spacing:0.3px'>Plugins</div>
<div class='t' style='left:50.8px;top:854px;font-size:20.0px;color:#f0f0f1;-webkit-text-stroke:0.15px;letter-spacing:0.22px'>Users</div>
<div class='t' style='left:51.8px;top:903px;font-size:20.0px;color:#f0f0f1;-webkit-text-stroke:0.15px;letter-spacing:0.25px'>Tools</div>
<div class='t' style='left:50.8px;top:952px;font-size:20.0px;color:#f0f0f1;-webkit-text-stroke:0.15px;letter-spacing:0.51px'>Settings</div>
<div class='t' style='left:51.8px;top:1000px;font-size:20.0px;color:#f0f0f1;-webkit-text-stroke:0.15px;letter-spacing:-0.24px'>All in One SEO</div>
<div class='t' style='left:51.8px;top:1064px;font-size:20.0px;color:#f0f0f1;-webkit-text-stroke:0.15px;letter-spacing:-0.25px'>Yoast SEO</div>
<div class='t' style='left:49.8px;top:1113px;font-size:20.0px;color:#f0f0f1;-webkit-text-stroke:0.15px;letter-spacing:0.53px'>Insights</div>
<div class='t' style='left:17.8px;top:292px;font-size:18.8px;color:#ffffff;font-weight:700;letter-spacing:-0.31px'>All Pages</div>
<div class='t' style='left:17.8px;top:332px;font-size:18.8px;color:rgba(240,246,252,.7);-webkit-text-stroke:0.15px;letter-spacing:-0.1px'>Add New</div>
<div class='t' style='left:50.8px;top:1161px;font-size:20.0px;color:#f0f0f1;-webkit-text-stroke:0.15px;letter-spacing:0.64px'>Pretty Links</div>
<div class='t' style='left:258.3px;top:75px;font-size:32.7px;color:#1d2327;-webkit-text-stroke:0.15px;letter-spacing:-1.48px'>Pages</div>
<div class='t' style='left:371.3px;top:83px;font-size:18.8px;color:#3a6fac;font-weight:700;letter-spacing:-0.35px'>Add New</div>
<div class='t' style='left:263px;top:140px;font-size:18.8px;color:#1d2327;font-weight:700;letter-spacing:-0.35px'>All</div>
<div class='t' style='left:290.9px;top:140px;font-size:18.8px;color:#50575e;-webkit-text-stroke:0.15px;letter-spacing:0.27px'>(67)</div>
<div class='t' style='left:336px;top:140px;font-size:18.8px;color:#646970;-webkit-text-stroke:0.15px'>|</div>
<div class='t' style='left:348.4px;top:140px;font-size:18.8px;color:#3a6fac;-webkit-text-stroke:0.15px;letter-spacing:0.26px'>Published</div>
<div class='t' style='left:438.7px;top:140px;font-size:18.8px;color:#50575e;-webkit-text-stroke:0.15px;letter-spacing:0.63px'>(55)</div>
<div class='t' style='left:484px;top:140px;font-size:18.8px;color:#646970;-webkit-text-stroke:0.15px'>|</div>
<div class='t' style='left:496.8px;top:140px;font-size:18.8px;color:#3a6fac;-webkit-text-stroke:0.15px;letter-spacing:0.52px'>Drafts</div>
<div class='t' style='left:555.4px;top:140px;font-size:18.8px;color:#50575e;-webkit-text-stroke:0.15px;letter-spacing:0.8px'>(3)</div>
<div class='t' style='left:590.2px;top:140px;font-size:18.8px;color:#646970;-webkit-text-stroke:0.15px'>|</div>
<div class='t' style='left:603px;top:140px;font-size:18.8px;color:#3a6fac;-webkit-text-stroke:0.15px;letter-spacing:0.15px'>Private</div>
<div class='t' style='left:667.9px;top:140px;font-size:18.8px;color:#50575e;-webkit-text-stroke:0.15px;letter-spacing:0.85px'>(9)</div>
<div class='t' style='left:702.5px;top:140px;font-size:18.8px;color:#646970;-webkit-text-stroke:0.15px'>|</div>
<div class='t' style='left:716.25px;top:140px;font-size:18.8px;color:#3a6fac;-webkit-text-stroke:0.15px'>Trash</div>
<div class='t' style='left:768.4px;top:140px;font-size:18.8px;color:#50575e;-webkit-text-stroke:0.15px;letter-spacing:0.95px'>(8)</div>
<div class='t' style='left:803.2px;top:140px;font-size:18.8px;color:#646970;-webkit-text-stroke:0.15px'>|</div>
<div class='t' style='left:815.9px;top:140px;font-size:18.8px;color:#3a6fac;-webkit-text-stroke:0.15px;letter-spacing:0.42px'>Cornerstone content</div>
<div class='t' style='left:1003.4px;top:140px;font-size:18.8px;color:#50575e;-webkit-text-stroke:0.15px;letter-spacing:0.6px'>(0)</div>
<div class='t' style='left:272.6px;top:186px;font-size:19.7px;color:#1d2327;-webkit-text-stroke:0.15px;letter-spacing:0.49px'>Bulk actions</div>
<div class='t' style='left:463.75px;top:186px;font-size:19.7px;color:#3a6fac;-webkit-text-stroke:0.15px;letter-spacing:-0.47px'>Apply</div>
<div class='t' style='left:565.5px;top:186px;font-size:19.7px;color:#1d2327;-webkit-text-stroke:0.15px;letter-spacing:0.36px'>All dates</div>
<div class='t' style='left:769.2px;top:186px;font-size:19.7px;color:#1d2327;-webkit-text-stroke:0.15px;letter-spacing:0.01px'>All SEO Scores</div>
<div class='t' style='left:1064px;top:186px;font-size:19.7px;color:#1d2327;-webkit-text-stroke:0.15px;letter-spacing:0.26px'>All Readability Scores</div>
<div class='t' style='left:1358.9px;top:186px;font-size:19.7px;color:#3a6fac;-webkit-text-stroke:0.15px;letter-spacing:-0.18px'>Filter</div>
<div class='t' style='left:1885.6px;top:131px;font-size:19.7px;color:#3a6fac;-webkit-text-stroke:0.15px;letter-spacing:-0.47px'>Search Pages</div>
<div class='t' style='left:1945px;top:184px;font-size:19.0px;color:#3c434a;-webkit-text-stroke:0.15px;letter-spacing:0.39px'>67 items</div>
<div class='t' style='left:1723px;top:54px;font-size:19.0px;color:#50575e;-webkit-text-stroke:0.15px;letter-spacing:0.09px'>Screen Options</div>
<div class='t' style='left:1934.2px;top:54px;font-size:19.0px;color:#50575e;-webkit-text-stroke:0.15px;letter-spacing:0.07px'>Help</div>
<div class='t' style='left:320.7px;top:244px;font-size:20.0px;color:#3a6fac;-webkit-text-stroke:0.15px;letter-spacing:0.32px'>Title</div>
<div class='t' style='left:798.8px;top:244px;font-size:20.0px;color:#1d2327;-webkit-text-stroke:0.15px;letter-spacing:0.24px'>Author</div>
<div class='t' style='left:1108.4px;top:244px;font-size:20.0px;color:#3a6fac;-webkit-text-stroke:0.15px;letter-spacing:0.2px'>Date</div>
<div class='t' style='left:1557.4px;top:244px;font-size:20.0px;color:#1d2327;-webkit-text-stroke:0.15px;letter-spacing:-0.23px'>AIOSEO Details</div>
<div class='t' style='left:323.3px;top:297px;font-size:19.5px;color:#3a6fac;font-weight:700;letter-spacing:0.18px'>About</div>
<div class='t' style='left:797.8px;top:297px;font-size:18.8px;color:#3a6fac;-webkit-text-stroke:0.15px;letter-spacing:-0.08px'>Samuel Earp</div>
<div class='t' style='left:1111.2px;top:297px;font-size:18.8px;color:#50575e;-webkit-text-stroke:0.15px;letter-spacing:0.32px'>Published</div>
<div class='t' style='left:1111.2px;top:325px;font-size:18.8px;color:#50575e;-webkit-text-stroke:0.15px;letter-spacing:0.45px'>2023/05/02 at 11:24 pm</div>
<div class='t' style='left:1496px;top:297px;font-size:18.8px;color:#50575e;-webkit-text-stroke:0.15px'>1</div>
<div class='t' style='left:1593.2px;top:355px;font-size:19.0px;color:#50575e;font-weight:700;letter-spacing:0.08px'>Title:</div>
<div class='t' style='left:1643.7px;top:355px;font-size:19.0px;color:#50575e;-webkit-text-stroke:0.15px;letter-spacing:0.19px'>About - Samuel Earp Artist</div>
<div class='t' style='left:1592.2px;top:398px;font-size:19.0px;color:#50575e;font-weight:700;letter-spacing:0.01px'>Description:</div>
<div class='t' style='left:1707.5px;top:398px;font-size:19.0px;color:#50575e;-webkit-text-stroke:0.15px;letter-spacing:0.12px'>welcome Hey!!! Thank you for</div>
<div class='t' style='left:1556.4px;top:426px;font-size:19.0px;color:#50575e;-webkit-text-stroke:0.15px;letter-spacing:0.05px'>stopping by my website, my name is Samuel Earp, a</div>
<div class='t' style='left:1557.4px;top:454px;font-size:19.0px;color:#50575e;-webkit-text-stroke:0.15px;letter-spacing:0.22px'>traditional realism artist who loves to paint</div>
<div class='t' style='left:1569.7px;top:306px;font-size:19.0px;color:#a7aaad;font-weight:700;letter-spacing:1.15px'>N/A</div>
<div class='t' style='left:323.4px;top:535px;font-size:19.5px;color:#3a6fac;font-weight:700;letter-spacing:0.13px'>Autumn Landscape – Lesson Notes</div>
<div class='t' style='left:664px;top:535px;font-size:19.5px;color:#50575e;font-weight:700;letter-spacing:-0.16px'>— Private</div>
<div class='t' style='left:797.8px;top:535px;font-size:18.8px;color:#3a6fac;-webkit-text-stroke:0.15px;letter-spacing:-0.08px'>Samuel Earp</div>
<div class='t' style='left:1111.2px;top:535px;font-size:18.8px;color:#50575e;-webkit-text-stroke:0.15px;letter-spacing:0.48px'>Last Modified</div>
<div class='t' style='left:1111.2px;top:563px;font-size:18.8px;color:#50575e;-webkit-text-stroke:0.15px;letter-spacing:0.45px'>2023/05/02 at 11:24 pm</div>
<div class='t' style='left:1497.6px;top:536px;font-size:18.8px;color:#50575e;-webkit-text-stroke:0.15px'>0</div>
<div class='t' style='left:1593.2px;top:594px;font-size:19.0px;color:#50575e;font-weight:700;letter-spacing:0.08px'>Title:</div>
<div class='t' style='left:1644px;top:594px;font-size:19.0px;color:#50575e;-webkit-text-stroke:0.15px;letter-spacing:0.11px'>Autumn Landscape – Lesson Notes -</div>
<div class='t' style='left:1556.4px;top:622px;font-size:19.0px;color:#50575e;-webkit-text-stroke:0.15px;letter-spacing:0.16px'>Samuel Earp Artist</div>
<div class='t' style='left:1592.2px;top:664px;font-size:19.0px;color:#50575e;font-weight:700;letter-spacing:0.01px'>Description:</div>
<div class='t' style='left:1706.2px;top:664px;font-size:19.0px;color:#50575e;-webkit-text-stroke:0.15px;letter-spacing:0.15px'>Painting Workshop - Lesson Notes</div>
<div class='t' style='left:1557.4px;top:692px;font-size:19.0px;color:#50575e;-webkit-text-stroke:0.15px;letter-spacing:-0.01px'>Autumn Landscape By Samuel Earp Colours The</div>
<div class='t' style='left:1556.4px;top:720px;font-size:19.0px;color:#50575e;-webkit-text-stroke:0.15px;letter-spacing:0.2px'>colours I used in this painting are as follows:</div>
<div class='t' style='left:1569.7px;top:544px;font-size:19.0px;color:#a7aaad;font-weight:700;letter-spacing:1.15px'>N/A</div>
<div class='t' style='left:323.4px;top:801px;font-size:19.5px;color:#3a6fac;font-weight:700;letter-spacing:0.15px'>Autumn Trees – Lesson Notes</div>
<div class='t' style='left:612.5px;top:801px;font-size:19.5px;color:#50575e;font-weight:700;letter-spacing:-0.16px'>— Private</div>
<div class='t' style='left:797.8px;top:801px;font-size:18.8px;color:#3a6fac;-webkit-text-stroke:0.15px;letter-spacing:-0.08px'>Samuel Earp</div>
<div class='t' style='left:1111.2px;top:801px;font-size:18.8px;color:#50575e;-webkit-text-stroke:0.15px;letter-spacing:0.48px'>Last Modified</div>
<div class='t' style='left:1111.2px;top:829px;font-size:18.8px;color:#50575e;-webkit-text-stroke:0.15px;letter-spacing:0.45px'>2023/05/02 at 11:24 pm</div>
<div class='t' style='left:1497.6px;top:801px;font-size:18.8px;color:#50575e;-webkit-text-stroke:0.15px'>0</div>
<div class='t' style='left:1593.2px;top:860px;font-size:19.0px;color:#50575e;font-weight:700;letter-spacing:0.08px'>Title:</div>
<div class='t' style='left:1644px;top:860px;font-size:19.0px;color:#50575e;-webkit-text-stroke:0.15px;letter-spacing:0.05px'>Autumn Trees – Lesson Notes - Samuel</div>
<div class='t' style='left:1556.4px;top:888px;font-size:19.0px;color:#50575e;-webkit-text-stroke:0.15px;letter-spacing:0.28px'>Earp Artist</div>
<div class='t' style='left:1592.2px;top:930px;font-size:19.0px;color:#50575e;font-weight:700;letter-spacing:0.01px'>Description:</div>
<div class='t' style='left:1706.2px;top:930px;font-size:19.0px;color:#50575e;-webkit-text-stroke:0.15px;letter-spacing:0.12px'>Painting Workshop No.10 -</div>
<div class='t' style='left:1557.4px;top:959px;font-size:19.0px;color:#50575e;-webkit-text-stroke:0.15px;letter-spacing:0.01px'>Autumn Trees Lesson Notes Reference Photos</div>
<div class='t' style='left:1556.4px;top:986px;font-size:19.0px;color:#50575e;-webkit-text-stroke:0.15px;letter-spacing:0.19px'>Please feel free to use the reference photos</div>
<div class='t' style='left:1569.7px;top:810px;font-size:19.0px;color:#a7aaad;font-weight:700;letter-spacing:1.15px'>N/A</div>
<div class='t' style='left:322px;top:1067px;font-size:19.5px;color:#3a6fac;font-weight:700;letter-spacing:-0.1px'>Blog</div>
<div class='t' style='left:370.8px;top:1067px;font-size:19.5px;color:#50575e;font-weight:700;letter-spacing:-0.16px'>— Posts Page</div>
<div class='t' style='left:797.8px;top:1067px;font-size:18.8px;color:#3a6fac;-webkit-text-stroke:0.15px;letter-spacing:-0.08px'>Samuel Earp</div>
<div class='t' style='left:1111.2px;top:1067px;font-size:18.8px;color:#50575e;-webkit-text-stroke:0.15px;letter-spacing:0.39px'>Published</div>
<div class='t' style='left:1111.2px;top:1095px;font-size:18.8px;color:#50575e;-webkit-text-stroke:0.15px;letter-spacing:0.41px'>2021/12/08 at 2:03 pm</div>
<div class='t' style='left:1497.6px;top:1067px;font-size:18.8px;color:#50575e;-webkit-text-stroke:0.15px'>0</div>
<div class='t' style='left:1593.2px;top:1067px;font-size:19.0px;color:#50575e;font-weight:700;letter-spacing:0.08px'>Title:</div>
<div class='t' style='left:1642.3px;top:1067px;font-size:19.0px;color:#50575e;-webkit-text-stroke:0.15px;letter-spacing:0.19px'>Blog - Samuel Earp Artist</div>
<div class='t' style='left:1592.2px;top:1110px;font-size:19.0px;color:#50575e;font-weight:700;letter-spacing:0.01px'>Description:</div>
<div style='position:absolute;left:0;top:0;width:2048px;height:492.4px;overflow:hidden'><div class='t' style='left:1556.4px;top:482px;font-size:19.0px;color:#50575e;-webkit-text-stroke:0.15px;letter-spacing:0.15px'>landscapes in oils, especially scenes of New</div></div>
<div style='position:absolute;left:0;top:0;width:2048px;height:758.6px;overflow:hidden'><div class='t' style='left:1557.4px;top:748px;font-size:19.0px;color:#50575e;-webkit-text-stroke:0.15px;letter-spacing:0.16px'>Titanium white Burnt sienna Yellow ochre Cadmium</div></div>
<div style='position:absolute;left:0;top:0;width:2048px;height:1024.7px;overflow:hidden'><div class='t' style='left:1556.4px;top:1014px;font-size:19.0px;color:#50575e;-webkit-text-stroke:0.15px;letter-spacing:0.08px'>provided. Planning Your Painting Whenever I paint a</div></div>
</body></html>
